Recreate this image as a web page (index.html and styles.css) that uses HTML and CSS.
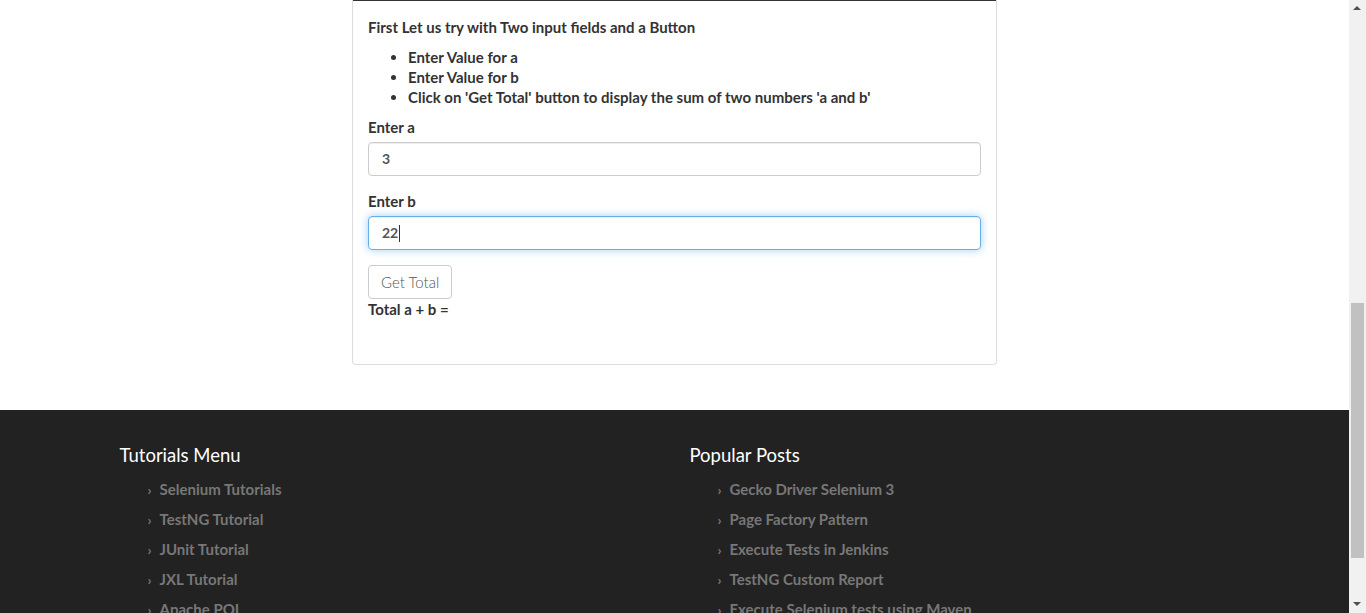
FILE: index.html
```html
<!DOCTYPE html>
<html>
<head>
<meta charset="utf-8">
<link rel="stylesheet" href="styles.css">
</head>
<body>
<div class="viewport">
  <div class="page">
    <div class="card-wrap">
      <div class="card">
        <div class="card-body">
          <p class="intro">First Let us try with Two input fields and a Button</p>
          <ul class="steps">
            <li>Enter Value for a</li>
            <li>Enter Value for b</li>
            <li>Click on 'Get Total' button to display the sum of two numbers 'a and b'</li>
          </ul>
          <div class="field">
            <label class="label">Enter a</label>
            <div class="input">3</div>
          </div>
          <div class="field">
            <label class="label">Enter b</label>
            <div class="input focus">22<span class="caret"></span></div>
          </div>
          <div class="btn">Get Total</div>
          <div class="total">Total a + b =</div>
        </div>
      </div>
    </div>
    <footer class="footer">
      <div class="container">
        <div class="col">
          <h3 class="col-title">Tutorials Menu</h3>
          <ul class="links">
            <li><span class="chev">›</span>Selenium Tutorials</li>
            <li><span class="chev">›</span>TestNG Tutorial</li>
            <li><span class="chev">›</span>JUnit Tutorial</li>
            <li><span class="chev">›</span>JXL Tutorial</li>
            <li><span class="chev">›</span>Apache POI</li>
          </ul>
        </div>
        <div class="col">
          <h3 class="col-title">Popular Posts</h3>
          <ul class="links">
            <li><span class="chev">›</span>Gecko Driver Selenium 3</li>
            <li><span class="chev">›</span>Page Factory Pattern</li>
            <li><span class="chev">›</span>Execute Tests in Jenkins</li>
            <li><span class="chev">›</span>TestNG Custom Report</li>
            <li><span class="chev">›</span>Execute Selenium tests using Maven</li>
          </ul>
        </div>
      </div>
    </footer>
  </div>
  <div class="scrollbar">
    <div class="arrow up"></div>
    <div class="track"><div class="thumb"></div></div>
    <div class="arrow down"></div>
  </div>
</div>
</body>
</html>
```
FILE: styles.css
```css
html, body {
  margin: 0;
  padding: 0;
  height: 613px;
  overflow: hidden;
  background: #fff;
}
body {
  font-family: "Lato", "Open Sans", sans-serif;
  font-size: 15px;
  color: #333;
}
.viewport {
  display: flex;
  height: 613px;
}
.page {
  flex: 1;
  display: flex;
  flex-direction: column;
  overflow: hidden;
}
.card-wrap {
  padding-bottom: 45px;
}
.card {
  width: 645px;
  margin: 0 auto;
  box-sizing: border-box;
  border: 1px solid #ddd;
  border-top: none;
  border-radius: 0 0 4px 4px;
  height: 365px;
}
.card-body {
  border-top: 1px solid #333;
  padding: 16px 15px 15px;
}
.intro {
  margin: 0 0 10px;
  font-weight: 700;
  line-height: 20px;
}
.steps {
  margin: 0 0 10px;
  padding-left: 40px;
  font-weight: 700;
  line-height: 20px;
}
.field {
  margin-bottom: 15px;
}
.label {
  display: block;
  font-weight: 700;
  line-height: 20px;
  margin-bottom: 5px;
}
.input {
  height: 34px;
  box-sizing: border-box;
  border: 1px solid #ccc;
  border-radius: 4px;
  padding: 6px 13px;
  line-height: 20px;
  font-weight: 700;
  font-size: 14px;
  color: #555;
  box-shadow: inset 0 1px 1px rgba(0,0,0,.075);
  display: flex;
  align-items: center;
}
.input.focus {
  border-color: #66afe9;
  box-shadow: inset 0 1px 1px rgba(0,0,0,.075), 0 0 8px rgba(102,175,233,.6);
}
.caret {
  display: inline-block;
  width: 1px;
  height: 17px;
  background: #333;
  margin-left: 1px;
}
.btn {
  display: inline-block;
  box-sizing: border-box;
  height: 34px;
  padding: 6px 12px;
  border: 1px solid #ccc;
  border-radius: 4px;
  line-height: 20px;
  color: #555;
  font-weight: 300;
}
.total {
  font-weight: 700;
  line-height: 20px;
}
.footer {
  flex: 1;
  background: #222;
}
.container {
  width: 1140px;
  margin: 0 auto;
  display: flex;
}
.col {
  width: 570px;
  box-sizing: border-box;
  padding: 0 15px;
}
.col-title {
  margin: 33px 0 12px;
  font-size: 18.5px;
  font-weight: 400;
  line-height: 24px;
  color: #fff;
}
.links {
  list-style: none;
  margin: 0;
  padding-left: 28px;
}
.links li {
  display: flex;
  align-items: center;
  height: 20px;
  line-height: 20px;
  margin-bottom: 10px;
  color: #777;
  font-weight: 700;
  white-space: nowrap;
}
.chev {
  width: 12px;
  font-size: 14px;
  line-height: 20px;
  padding-top: 2px;
  color: #777;
}
.scrollbar {
  width: 17px;
  background: #f1f1f1;
  display: flex;
  flex-direction: column;
}
.arrow {
  height: 17px;
  position: relative;
}
.arrow::after {
  content: "";
  position: absolute;
  left: 4px;
  top: 6px;
  border-left: 4px solid transparent;
  border-right: 4px solid transparent;
}
.arrow.up::after {
  border-bottom: 4px solid #505050;
}
.arrow.down::after {
  border-top: 4px solid #505050;
}
.track {
  flex: 1;
  padding: 0 2px;
}
.thumb {
  margin-top: 286px;
  height: 255px;
  background: #c1c1c1;
}
```
